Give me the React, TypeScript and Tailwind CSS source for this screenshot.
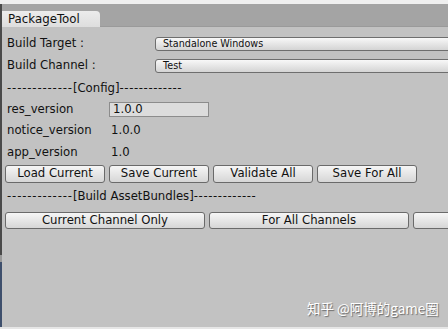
import React from "react";

const font = "font-['DejaVu_Sans',sans-serif]";

function Btn({ label, w }: { label: string; w: string }) {
  return (
    <div
      className={`${w} shrink-0 h-full flex items-center justify-center rounded-[3px] border border-[#6a6a6a] bg-gradient-to-b from-[#f6f6f6] to-[#d6d6d6] text-[11.7px] text-[#111] whitespace-nowrap`}
    >
      {label}
    </div>
  );
}

function Dropdown({ text }: { text: string }) {
  return (
    <div className="w-[310px] shrink-0 h-[14px] flex items-center pl-[7px] rounded-[3px] border border-[#6e6e6e] bg-gradient-to-b from-[#f8f8f8] to-[#d4d4d4] text-[9.6px] text-[#111] leading-none">
      {text}
    </div>
  );
}

function Divider({ title }: { title: string }) {
  return (
    <div className="h-[14px] flex items-center pl-[2px] whitespace-nowrap">
      <span className="tracking-[0.85px]">-------------</span>
      <span>{title}</span>
      <span className="tracking-[0.6px]">-------------</span>
    </div>
  );
}

export default function App() {
  return (
    <div className={`w-[448px] h-[329px] overflow-hidden relative flex flex-col bg-[#c2c2c2] ${font} text-[#111]`}>
      <div className="h-[4px] bg-[#efefef] shrink-0" />
      <div className="flex flex-1 min-h-0">
        <div className="w-[2px] shrink-0 flex flex-col">
          <div className="h-[251px] bg-[#4a4a4a]" />
          <div className="h-[7px] bg-[#9a9a9a]" />
          <div className="flex-1 bg-[#3e4f6c]" />
        </div>
        <div className="flex-1 min-w-0 flex flex-col">
          <div className="h-[23px] shrink-0 bg-[#a4a4a4] pt-[7px] border-b border-[#9a9a9a]">
            <div className="w-[98px] h-[16px] bg-gradient-to-b from-[#ececec] to-[#dedede] rounded-tr-[4px] pl-[6px] text-[11.8px] leading-[16px] text-[#111]">
              PackageTool
            </div>
          </div>
          <div className="flex-1 flex flex-col pl-[3px] text-[11.7px]">
            <div className="mt-[10px] h-[14px] flex items-center">
              <div className="w-[150px] shrink-0 pl-[2px]">Build Target :</div>
              <Dropdown text="Standalone Windows" />
            </div>
            <div className="mt-[8px] h-[14px] flex items-center">
              <div className="w-[150px] shrink-0 pl-[2px]">Build Channel :</div>
              <Dropdown text="Test" />
            </div>
            <div className="mt-[9px]">
              <Divider title="[Config]" />
            </div>
            <div className="mt-[6px] h-[15px] flex items-center">
              <div className="w-[104px] shrink-0 pl-[2px]">res_version</div>
              <div className="w-[100px] h-[15px] flex items-center pl-[3px] bg-[#dcdcdc] border border-[#8c8c8c]">1.0.0</div>
            </div>
            <div className="mt-[7px] h-[14px] flex items-center">
              <div className="w-[106px] shrink-0 pl-[2px]">notice_version</div>
              <div>1.0.0</div>
            </div>
            <div className="mt-[8px] h-[14px] flex items-center">
              <div className="w-[106px] shrink-0 pl-[2px]">app_version</div>
              <div>1.0</div>
            </div>
            <div className="mt-[5px] h-[18px] flex gap-[4px]">
              <Btn label="Load Current" w="w-[100px]" />
              <Btn label="Save Current" w="w-[100px]" />
              <Btn label="Validate All" w="w-[100px]" />
              <Btn label="Save For All" w="w-[100px]" />
            </div>
            <div className="mt-[7px]">
              <Divider title="[Build AssetBundles]" />
            </div>
            <div className="mt-[8px] h-[17px] flex gap-[4px]">
              <Btn label="Current Channel Only" w="w-[200px]" />
              <Btn label="For All Channels" w="w-[200px]" />
              <Btn label="" w="w-[200px]" />
            </div>
          </div>
        </div>
      </div>
      <div className="h-[2px] bg-[#e6e6e6] shrink-0" />
      <div className="absolute left-[307px] top-[299px] text-[13.5px] leading-[18px] text-white whitespace-nowrap font-['Noto_Sans_CJK_SC',sans-serif] [text-shadow:1px_1px_1px_rgba(0,0,0,0.45)]">
        知乎 @阿博的game圈
      </div>
    </div>
  );
}
